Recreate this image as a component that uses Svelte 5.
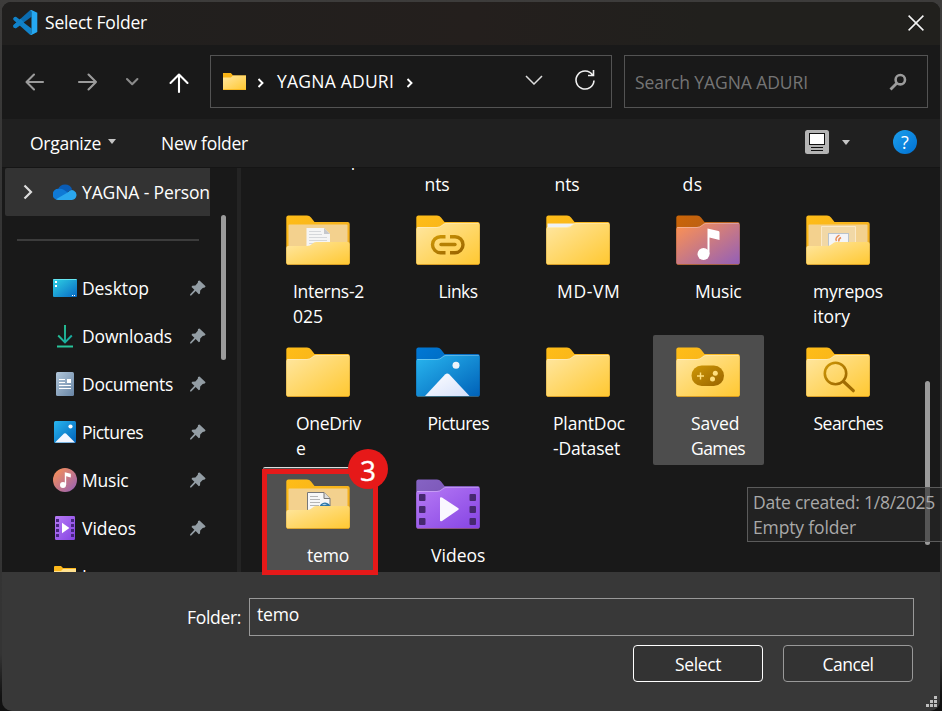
<script>
  // Tracks a label so that it takes up exactly the given width.
  function fit(node, width) {
    const natural = node.getBoundingClientRect().width;
    node.style.letterSpacing = (width - natural) / node.textContent.length + 'px';
  }

  const places = [
    { name: 'Desktop', icon: 'desktop', w: 67 },
    { name: 'Downloads', icon: 'downloads', w: 90 },
    { name: 'Documents', icon: 'documents', w: 91 },
    { name: 'Pictures', icon: 'pictures', w: 61 },
    { name: 'Music', icon: 'music', w: 46.5 },
    { name: 'Videos', icon: 'videos', w: 54 }
  ];

  // block: width of the centred caption block, lines: [text, width]
  const tiles = [
    { block: 67, lines: [['Desktop', 67]] },
    { block: 67, lines: [['', 0], ['nts', 25]] },
    { block: 67, lines: [['', 0], ['nts', 25]] },
    { block: 71, lines: [['', 0], ['ds', 20]] },
    { block: 70, lines: [] },
    { icon: 'open', paper: 'page', block: 70, lines: [['Interns-2', 71], ['025', 30]] },
    { icon: 'links', block: 39, lines: [['Links', 39]] },
    { icon: 'peek', block: 62, lines: [['MD-VM', 63.5]] },
    { icon: 'music', block: 46, lines: [['Music', 46.5]] },
    { icon: 'open', paper: 'java', block: 70, lines: [['myrepos', 70], ['itory', 37]] },
    { icon: 'plain', block: 64, lines: [['OneDriv', 65], ['e', 10]] },
    { icon: 'pictures', block: 61, lines: [['Pictures', 61.5]] },
    { icon: 'plain', block: 70, lines: [['PlantDoc', 72], ['-Dataset', 67]] },
    { icon: 'games', block: 54, hover: true, lines: [['Saved', 48.5], ['Games', 54]] },
    { icon: 'searches', block: 69, lines: [['Searches', 69.5]] },
    { icon: 'open', paper: 'doc', block: 42, picked: true, lines: [['temo', 42]] },
    { icon: 'videos', block: 54, lines: [['Videos', 54.5]] }
  ];

  const fronts = { music: 'url(#gMusic)', pictures: 'url(#gPic)', videos: 'url(#gVid)' };
  const backs = { music: 'url(#gMusicB)', pictures: 'url(#gPicB)', videos: 'url(#gVidB)' };
</script>

{#snippet pin()}
  <svg class="pin" width="18" height="18" viewBox="0 0 18 18">
    <path d="M10.5 1.4 16.6 7.3 15.7 8.5 13.7 8.9 11.2 11.5 11 14.6 9.8 15.2 6.7 12.1 2.2 16.4 1 16.5 1.2 15.3 5.4 10.8 2.5 8 3.2 6.8 6.4 6.5 8.8 3.8 9 2z" fill="#939da4" />
  </svg>
{/snippet}

{#snippet placeIcon(kind)}
  <svg width="24" height="24" viewBox="0 0 24 24">
    {#if kind === 'desktop'}
      <rect y="3" width="24" height="18" rx="1" fill="url(#gDesk)" />
      <path d="M.5 3.5h23" stroke="#66e6f2" />
      <path d="M2 5h2v2H2zM2 9h2v2H2zM19 19h1v1h-1zM21 19h1v1h-1z" fill="#fff" />
    {:else if kind === 'downloads'}
      <path d="M12 1v17M5.2 11.5 12 18.3l6.8-6.8" fill="none" stroke="url(#gDown)" stroke-width="1.9" />
      <path d="M4 22.5h16" stroke="#28c49b" stroke-width="2" />
    {:else if kind === 'documents'}
      <rect x="3" width="18" height="24" rx="1.5" fill="url(#gDoc)" />
      <path d="M6 7.5h6M6 10.5h6M6 13.5h12M6 16.5h12" stroke="#fff" stroke-width="1.2" />
      <rect x="14" y="7" width="4" height="4" fill="#fff" />
    {:else if kind === 'pictures'}
      <rect x="1" y="1" width="22" height="22" rx="1.5" fill="url(#gPic)" />
      <path d="M2 22.5 11 13.6q1-.9 2 0L22 22.500z" fill="#f4f7ff" />
      <circle cx="17.5" cy="6.5" r="2.1" fill="#fff" />
    {:else if kind === 'music'}
      <circle cx="12" cy="12" r="12" fill="url(#gMusic)" />
      <circle cx="10" cy="17" r="3" fill="#fff" />
      <path d="M11.8 17V4.2l6 1.5v3.8l-4.6-1.2V17z" fill="#fff" />
    {:else if kind === 'videos'}
      <rect x="2" width="20" height="24" rx="1.2" fill="url(#gVid)" />
      <path d="M9 6.8 16.4 12 9 17.2z" fill="#fff" />
      {#each [3, 8, 13, 18] as y}
        <rect x="3" {y} width="3" height="3" fill="#46257f" /><rect x="18" {y} width="3" height="3" fill="#46257f" />
      {/each}
    {/if}
  </svg>
{/snippet}

{#snippet folder(tile)}
  <svg class="folder" width="64" height="50" viewBox="0 0 64 50">
    <path d="M.3 2.5Q.3.5 2.300.5H21Q23.5.5 25 2.4L28.5 7H61.700Q63.700 7 63.700 9V48Q63.700 50 61.700 50H2.300Q.3 50 .3 48z" fill={backs[tile.icon] ?? 'url(#gBack)'} />
    {#if tile.icon === 'open'}
      <rect x="2.5" y="9.5" width="59" height="32" rx="1" fill="#f3d18e" />
      {#if tile.paper === 'java'}
        <path d="M15.5 34V11.5h34V34" fill="#f1d8a6" stroke="#fae9c7" />
        <rect x="22.5" y="18.5" width="20" height="18" fill="#f4f5f7" stroke="#b9c3cb" />
        <path d="M33.500 20q-5 3-3 6M35 22.500q-3 1.500-2 4" fill="none" stroke="#e98a52" stroke-width="1.4" />
      {:else if tile.paper === 'page'}
        <path d="M20.5 13H38l6 6v16H20.5z" fill="#f5f5f5" />
        <path d="M38 13v6h6z" fill="#c6c8cc" />
        <path d="M23 16.5h12M23 19.5h13M23 22.5h18M23 25.5h18M23 28.5h18" stroke="#d5d7da" />
      {:else}
        <path d="M21.5 13.5H38l6 6V35H21.5z" fill="#f7f7f7" stroke="#777" />
        <path d="M38 13.5v6h6" fill="#ddd" stroke="#777" />
        <path d="M24 17.5h8M24 20.5h10M24 23.5h10M24 26.5h9" stroke="#b5b5b5" />
        <circle cx="39" cy="29" r="5.6" fill="#2e77a8" /><path d="M36 25.500q3-1.500 5 0l-3 .8z" fill="#a9d0e6" />
      {/if}
      <path d="M.3 33Q.3 31 2.300 31H21Q24 31 26 29T30 27H61.700Q63.700 27 63.700 29V48Q63.700 49.7 61.700 49.7H2.300Q.3 49.7 .3 48z" fill="url(#gFront)" />
    {:else}
      {#if tile.icon === 'peek'}<path d="M1.5 8.5h27v5h-27z" fill="#eef2f7" />{/if}
      <path d="M.3 14Q.3 12 2.300 12H21Q24 12 26 10T30 8H61.700Q63.700 8 63.700 10V48Q63.700 49.5 61.700 49.5H2.300Q.3 49.5 .3 48z" fill={fronts[tile.icon] ?? 'url(#gFront)'} />
      <path d="M1 12.5H21Q24 12.4 26 10.4T30 8.4H63" fill="none" stroke="#fff" stroke-opacity=".3" />
    {/if}
    <path d="M1.500 49.5h61" stroke="#9a5b00" stroke-opacity=".35" />
    {#if tile.icon === 'links'}
      <g fill="none" stroke="url(#gMark)" stroke-width="3.400">
        <path d="M29.5 21.700H24.500a8 8 0 0 0 0 16h5M34 21.700h5a8 8 0 0 1 0 16h-5" />
        <path d="M25 29.500h14" stroke="#b58004" stroke-linecap="round" />
      </g>
    {:else if tile.icon === 'games'}
      <rect x="15.5" y="18.5" width="32.5" height="20.5" rx="10.2" fill="url(#gMark)" />
      <path d="M21 29h7M24.5 25.500v7" stroke="#ffdf7e" stroke-width="1.4" />
      <circle cx="39.3" cy="26.2" r="2.5" fill="#ffdf7e" /><circle cx="36.500" cy="32" r="2.5" fill="#ffdf7e" />
    {:else if tile.icon === 'searches'}
      <circle cx="29.500" cy="26.500" r="10.700" fill="none" stroke="url(#gMark)" stroke-width="2.6" />
      <path d="M37.500 34.500 47.300 43.700" stroke="#a06c02" stroke-width="3.200" stroke-linecap="round" />
    {:else if tile.icon === 'music'}
      <circle cx="27.500" cy="39" r="6" fill="#fff" />
      <path d="M31.500 39V13.500L42.500 16q1 .3 1 1.500V25l-10-2.500V39z" fill="#fff" />
    {:else if tile.icon === 'pictures'}
      <path d="M9 49 29 27.500q2.200-2.200 4.400 0L53.500 49z" fill="url(#gSnow)" />
      <circle cx="40" cy="18.300" r="3.500" fill="#eef4fa" />
    {:else if tile.icon === 'videos'}
      <path d="M24 19.500q0-2 2-1l16 10.500q1.500 1 0 2L26 42q-2 1-2-1z" fill="#faf7ff" />
      {#each [15, 27, 39] as y}
        <rect x="3" {y} width="6.500" height="7" rx="1" fill="#46286f" /><rect x="53.500" {y} width="6.500" height="7" rx="1" fill="#46286f" />
      {/each}
    {/if}
  </svg>
{/snippet}

<svg class="defs" width="0" height="0">
  <defs>
    {#each [['gFront', '#ffe7a2', '#ffc831'], ['gBack', '#ffbd17', '#eeaa22'], ['gMusic', '#ff9350', '#925fb9'], ['gMusicB', '#cc6506', '#9c5730'], ['gPic', '#29b6ef', '#0061b8'], ['gPicB', '#0078d5', '#0058a8'], ['gVid', '#b77bf5', '#8543e3'], ['gVidB', '#8663c4', '#6c45a4'], ['gMark', '#cf9806', '#986300'], ['gDesk', '#2fd2e4', '#0869c4'], ['gDown', '#2cc990', '#14a5a2'], ['gDoc', '#b2c7da', '#6885a5'], ['gSnow', '#ffffff', '#d5e0fb']] as [id, a, b]}
      <linearGradient {id} x1="0" y1="0" x2="1" y2="1"><stop offset="0" stop-color={a} /><stop offset="1" stop-color={b} /></linearGradient>
    {/each}
  </defs>
</svg>

<div class="desktop">
  <div class="dialog">
    <header class="title">
      <svg width="25" height="25" viewBox="0 0 25 25">
        <path d="M18.500 18.500 3 6.800 1.300 7 .3 8.200v1.500L17 24.800l1.500-.8z" fill="#1182c9" />
        <path d="M.3 15.300 17 .2l1.500.8v5.800L3 18.200l-1.700-.1-1-1.200z" fill="#0b6cb0" />
        <path d="M.3 15.300 7.500 8.800l3.500 3.500-8 5.900-1.700-.1-1-1.200z" fill="#1182c9" />
        <path d="M17 .2 18.500 0 24.300 2.700V22L18.500 25 17 24.800l1.500-1.300V1.500z" fill="#25a8f2" />
      </svg>
      <span use:fit={102}>Select Folder</span>
      <svg class="close" width="16" height="16" viewBox="0 0 16 16"><path d="m.6.6 14.800 14.800M15.400.6.6 15.400" stroke="#f4f4f4" stroke-width="1.500" /></svg>
    </header>

    <nav class="bar">
      <svg class="arrows" width="208" height="40" viewBox="0 0 208 40" fill="none" stroke-width="2.100" stroke-linecap="round" stroke-linejoin="round">
        <path d="M41 20H24.500m7.500-7.500L24.500 20l7.500 7.500M77 20h17m-7.500-7.500L94 20l-7.500 7.500" stroke="#9b9b9b" />
        <path d="m125 17 5.200 5.200 5.200-5.200" stroke="#8b8b8b" />
        <path d="M177 30V12.500M168.500 21l8.500-8.500 8.500 8.500" stroke="#fff" />
      </svg>
      <div class="address">
        <svg width="23" height="17" viewBox="0 0 64 50" preserveAspectRatio="none"><path d="M0 0H22l6 7H64V50H0z" fill="#f9b416" /><path d="M0 13H22l6-6H64V48H0z" fill="url(#gFront)" /></svg>
        <svg class="crumb" width="8" height="10" viewBox="0 0 8 10"><path d="m1.500 1 4 4-4 4" /></svg>
        <span use:fit={117}>YAGNA ADURI</span>
        <svg class="crumb last" width="8" height="10" viewBox="0 0 8 10"><path d="m1.500 1 4 4-4 4" /></svg>
        <svg class="drop" width="18" height="10" viewBox="0 0 18 10"><path d="m1 1 8 8 8-8" fill="none" stroke="#ddd" stroke-width="1.500" /></svg>
        <svg class="reload" width="22" height="22" viewBox="0 0 22 22" fill="none" stroke="#f0f0f0" stroke-width="1.600"><path d="M20 11.500a9 9 0 1 1-1.500-5.500M19.500 1v5.500H14" /></svg>
      </div>
      <div class="search">
        <span use:fit={173}>Search YAGNA ADURI</span>
        <svg width="18" height="18" viewBox="0 0 18 18" fill="none" stroke="#9b9b9b"><circle cx="11.300" cy="6.700" r="4.700" stroke-width="2.600" /><path d="m8 10-6.500 6.500" stroke-width="2.800" /></svg>
      </div>
    </nav>

    <div class="tools">
      <span use:fit={71}>Organize</span>
      <i class="caret"></i>
      <span class="new" use:fit={87}>New folder</span>
      <svg class="view" width="24" height="24" viewBox="0 0 24 24"><rect width="24" height="24" rx="2.500" fill="#b4b4b4" /><rect x="4.500" y="3.500" width="15" height="11" fill="#fff" stroke="#111" /><path d="M6 17.500h12M6 20.500h12" stroke="#111" /></svg>
      <i class="caret second"></i>
      <span class="help">?</span>
    </div>

    <main>
      <aside>
        <div class="places">
          <div class="place current">
            <svg class="chev" width="10" height="16" viewBox="0 0 10 16"><path d="m1.500 1.500 6.500 6.500-6.500 6.500" fill="none" stroke="#ddd" stroke-width="2.200" /></svg>
            <svg width="24" height="24" viewBox="0 0 24 24">
              <path d="M5 9.500a7.600 7.600 0 0 1 14.200 0q-4 1-6 5L5 12z" fill="#0a5cb5" />
              <path d="M5.500 8.800c4-.6 5 .7 9.500 4L5 20A5.600 5.600 0 0 1 5.500 8.800z" fill="#0f79d5" />
              <path d="M3 19.200 15 12.300Q18 9 21 10.700A5 5 0 0 1 19 20H5.500q-1.500 0-2.500-.8z" fill="#2aa7ee" />
            </svg>
            <span use:fit={128}>YAGNA - Person</span>
          </div>
          <div class="rule"></div>
          {#each places as place}
            <div class="place">
              {@render placeIcon(place.icon)}
              <span use:fit={place.w}>{place.name}</span>
              {@render pin()}
            </div>
          {/each}
          <div class="place">
            <svg width="24" height="20" viewBox="0 0 24 20"><path d="M1 1q0-1 1-1h6l2 2h13v18H1z" fill="#fcb81b" /><path d="M1 5h7l2-2h13v17H1z" fill="#ffe190" /></svg>
            <span class="sliver">I</span>
          </div>
        </div>
        <div class="thumb"></div>
      </aside>

      <section>
        <div class="grid">
          {#each tiles as tile}
            <div class="tile" class:hover={tile.hover} class:picked={tile.picked}>
              {#if tile.icon}{@render folder(tile)}{:else}<div class="folder"></div>{/if}
              <div class="caption" style:width="{tile.block}px">
                {#each tile.lines as [text, w]}
                  <div class="line">{#if text}<span use:fit={w}>{text}</span>{/if}</div>
                {/each}
              </div>
            </div>
          {/each}
        </div>
        <div class="thumb right"></div>
      </section>
    </main>

    <footer>
      <div class="field">
        <label for="folder"><span use:fit={54}>Folder:</span></label>
        <div class="input" id="folder"><span use:fit={42}>temo</span></div>
      </div>
      <div class="buttons">
        <button class="primary"><span use:fit={46}>Select</span></button>
        <button><span use:fit={51}>Cancel</span></button>
      </div>
      <svg class="grip" width="11" height="11" viewBox="0 0 11 11"><path d="M8 0h3v3H8zM4 4h3v3H4zM8 4h3v3H8zM0 8h3v3H0zM4 8h3v3H4zM8 8h3v3H8z" fill="#bfbfbf" /></svg>
    </footer>
  </div>

  <div class="tip">
    <div><span use:fit={182}>Date created: 1/8/2025</span></div>
    <div><span use:fit={103}>Empty folder</span></div>
  </div>
  <div class="marker"></div>
  <div class="badge">3</div>
</div>

<style>
  :global(body) { background: #161616; }
  .desktop {
    position: relative; width: 942px; height: 711px; overflow: hidden; box-sizing: border-box;
    padding: 2px 2px 0; background: linear-gradient(#3d3c3b, #353535 30%, #343434 92%, #111 98%);
    font: 17.500px/25px "Open Sans", "Noto Sans", sans-serif; color: #fff;
  }
  .defs { position: absolute; }
  span { white-space: pre; }
  svg { display: block; flex: none; }
  .dialog { display: flex; flex-direction: column; width: 938px; height: 709px; border-radius: 9px 9px 10px 10px; overflow: hidden; background: #191919; }
  .title { display: flex; align-items: center; height: 43px; box-sizing: border-box; padding: 0 16px 2px 11px; background: linear-gradient(90deg, #201f1e, #241f1d 50%, #21201d 75%); flex: none; }
  .title span { margin-left: 7px; }
  .close { margin: 0 0 0 auto; }
  .bar { display: flex; height: 74px; flex: none; align-items: center; box-sizing: border-box; padding-bottom: 1px; }
  .arrows { margin-top: 1px; }
  .address, .search { display: flex; align-items: center; height: 53px; box-sizing: border-box; border: 1px solid #535353; }
  .address { width: 402px; padding: 0 15px 0 12px; }
  .crumb { margin: 2px 12px 0 11px; fill: none; stroke: #fff; stroke-width: 1.900; }
  .crumb.last { margin-left: 12px; }
  .drop { margin: -3px 0 0 auto; }
  .reload { margin: -4px 0 0 31px; }
  .search { width: 304px; margin-left: 12px; padding: 0 20px 0 10px; color: #757575; justify-content: space-between; }
  .search span { padding-top: 1px; }
  .tools { display: flex; align-items: center; height: 48px; flex: none; padding: 0 23px 0 28px; box-sizing: border-box; background: #202020; }
  .caret { border: 4.500px solid transparent; border-top: 5px solid #c5c5c5; border-bottom: 0; margin: -3px 0 0 7px; }
  .new { margin-left: 45px; }
  .view { margin: -2px 0 0 auto; }
  .caret.second { margin-left: 13px; margin-top: -1px; }
  .help { width: 24px; height: 24px; border-radius: 50%; margin: -2px 0 0 43px; background: linear-gradient(135deg, #1c9fec, #0070d2); text-align: center; font-size: 18px; line-height: 24px; }
  main { display: flex; height: 405px; flex: none; border-top: 1px solid #151515; box-sizing: border-box; overflow: hidden; }
  aside { display: flex; width: 235px; flex: none; box-sizing: border-box; padding-left: 3px; }
  .places { width: 205px; flex: none; }
  .place { display: flex; align-items: center; height: 48px; padding-left: 48px; overflow: hidden; box-sizing: border-box; }
  .place > span { margin: 0 0 0 5px; }
  .pin { margin-left: auto; margin-right: 3px; }
  .current { background: #333; padding-left: 18px; border-radius: 2px 0 0 2px; }
  .chev { margin-right: 20px; }
  .rule { height: 2px; margin: 23px 11px 23px 12px; background: #3c3c3c; }
  .sliver { line-height: 24px; }
  .thumb { width: 5px; height: 145px; margin: 47px 0 0 11px; border-radius: 3px; background: #9b9b9b; flex: none; }
  section { display: flex; flex: 1; border-left: 4px solid #242424; }
  .grid { display: grid; grid-template-columns: repeat(5, 111px); grid-auto-rows: 130px; gap: 2px 19px; margin: -97px 0 0 22px; flex: none; }
  .tile { display: flex; flex-direction: column; box-sizing: border-box; padding: 12px 0 0 23px; border-radius: 2px; }
  .folder { height: 50px; flex: none; border-radius: 2px; }
  .caption { margin: 14px 0 0 42px; transform: translateX(-50%); }
  .line { height: 25px; }
  .hover { background: #4d4d4d; }
  .picked { background: #505050; border-top: 1px solid #ddd; padding-top: 11px; }
  .right { margin: 213px 0 0 31px; height: 164px; }
  footer { position: relative; flex: 1; background: #383838; }
  .field { display: flex; padding: 26px 0 0 185px; height: 38px; }
  label { width: 62px; padding-top: 7px; box-sizing: border-box; flex: none; }
  .input { width: 665px; height: 38px; box-sizing: border-box; border: 1px solid #999; padding: 3px 7px; }
  .buttons { display: flex; justify-content: flex-end; gap: 20px; margin: 9px 27px 0 0; }
  button { display: flex; align-items: center; justify-content: center; width: 130px; height: 37px; box-sizing: border-box; padding: 1px 0 0; font: inherit; color: #fff; background: #333; border: 1px solid #999; border-radius: 4px; }
  .primary { border-color: #fff; }
  .grip { position: absolute; right: 3px; bottom: 4px; }
  .tip { position: absolute; left: 747px; top: 487px; width: 195px; height: 55px; box-sizing: border-box; padding: 2px 0 0 5px; border: 1px solid #5b5b5b; border-right: 0; background: rgba(40, 40, 40, .6); color: #a9a9a9; }
  .marker { position: absolute; left: 262px; top: 469px; width: 116px; height: 106px; box-sizing: border-box; border: 5px solid #e61919; }
  .badge { position: absolute; left: 348px; top: 449px; width: 40px; height: 40px; border-radius: 50%; background: #e61919; font: 400 28px/42px "Open Sans", sans-serif; text-align: center; -webkit-text-stroke: .4px #fff; }
</style>
